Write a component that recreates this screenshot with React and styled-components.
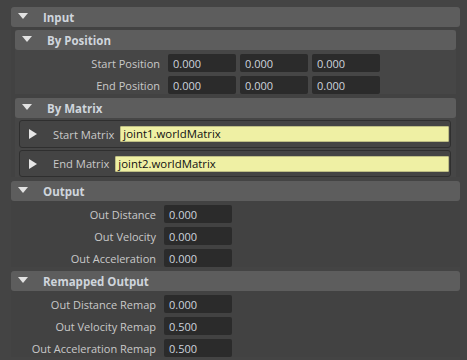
import React from "react";
import styled, { createGlobalStyle } from "styled-components";

const GlobalStyle = createGlobalStyle`
    html, body {
        margin: 0;
        padding: 0;
        background: #444444;
    }
    body {
        font-family: "Open Sans", "Noto Sans", sans-serif;
        font-size: 11px;
        color: #c8c8c8;
    }
`;

const Page = styled.div`
    width: 467px;
    height: 360px;
    overflow: hidden;
    box-sizing: border-box;
    padding: 7px 7px 0 11px;
    display: flex;
    flex-direction: column;
    gap: 4px;
    background: #444444;
`;

const Frame = styled.div`
    display: flex;
    flex-direction: column;
    background: ${(p) => (p.$inner ? "#464646" : "#424242")};
    margin: ${(p) => (p.$inner ? "0 4px 0 4px" : "0")};
`;

const Header = styled.div`
    height: 20px;
    box-sizing: border-box;
    display: flex;
    align-items: center;
    background: #5d5d5d;
    border-radius: 3px;
    padding-left: 7px;
    font-weight: 700;
    font-size: 11.5px;
    color: #cfd5dc;
`;

const DownArrow = styled.span`
    width: 0;
    height: 0;
    border-left: 5.5px solid transparent;
    border-right: 5.5px solid transparent;
    border-top: 6px solid #e2e2e2;
    margin-right: 15px;
    margin-top: -2px;
`;

const Body = styled.div`
    display: flex;
    flex-direction: column;
    gap: ${(p) => p.$gap || 4}px;
    padding-top: ${(p) => p.$top || 4}px;
    padding-bottom: ${(p) => p.$bottom || 0}px;
`;

const Row = styled.div`
    height: 18px;
    display: flex;
    align-items: center;
`;

const Label = styled.div`
    width: ${(p) => p.$w}px;
    padding-right: 8px;
    box-sizing: border-box;
    text-align: right;
    white-space: nowrap;
    color: #c9c9c9;
`;

const Fields = styled.div`
    display: flex;
    gap: 4px;
`;

const NumField = styled.div`
    width: 68px;
    height: 18px;
    box-sizing: border-box;
    background: #2b2b2b;
    border-radius: 2px;
    padding: 2px 0 0 5px;
    color: #cdd4dd;
    font-size: 11px;
    line-height: 16px;
`;

const MatrixBox = styled.div`
    height: ${(p) => p.$h}px;
    box-sizing: border-box;
    margin: 0 5px 0 4px;
    border: 1px solid #2f2f2f;
    border-radius: 3px;
    display: flex;
    align-items: center;
    background: #444444;
`;

const RightArrow = styled.span`
    width: 0;
    height: 0;
    border-top: 5.5px solid transparent;
    border-bottom: 5.5px solid transparent;
    border-left: 8px solid #e6e6e6;
    margin-left: 9px;
    margin-right: 16px;
`;

const MatrixLabel = styled.span`
    color: #c9c9c9;
    font-size: 11.2px;
    margin-right: 6px;
    white-space: nowrap;
`;

const Connection = styled.div`
    flex: 1;
    height: 16px;
    margin-right: 1px;
    box-sizing: border-box;
    background: #eff0a4;
    border: 1px solid #bdbd84;
    border-radius: 1px;
    color: #111111;
    font-size: 11.4px;
    line-height: 14px;
    padding-left: 2px;
`;

const positions = ["Start Position", "End Position"];
const outputs = [
    ["Out Distance", "0.000"],
    ["Out Velocity", "0.000"],
    ["Out Acceleration", "0.000"],
];
const remapped = [
    ["Out Distance Remap", "0.000"],
    ["Out Velocity Remap", "0.500"],
    ["Out Acceleration Remap", "0.500"],
];

const App = () => {
    return (
        <Page>
            <GlobalStyle />
            <Frame>
                <Header>
                    <DownArrow />
                    Input
                </Header>
                <Body $top={3} $gap={4}>
                    <Frame $inner>
                        <Header>
                            <DownArrow />
                            By Position
                        </Header>
                        <Body $top={4} $gap={4}>
                            {positions.map((name) => (
                                <Row key={name}>
                                    <Label $w={153}>{name}</Label>
                                    <Fields>
                                        <NumField>0.000</NumField>
                                        <NumField>0.000</NumField>
                                        <NumField>0.000</NumField>
                                    </Fields>
                                </Row>
                            ))}
                        </Body>
                    </Frame>
                    <Frame $inner>
                        <Header>
                            <DownArrow />
                            By Matrix
                        </Header>
                        <Body $top={2} $gap={2}>
                            <MatrixBox $h={28}>
                                <RightArrow />
                                <MatrixLabel>Start Matrix</MatrixLabel>
                                <Connection>joint1.worldMatrix</Connection>
                            </MatrixBox>
                            <MatrixBox $h={27}>
                                <RightArrow />
                                <MatrixLabel>End Matrix</MatrixLabel>
                                <Connection>joint2.worldMatrix</Connection>
                            </MatrixBox>
                        </Body>
                    </Frame>
                </Body>
            </Frame>
            <Frame>
                <Header>
                    <DownArrow />
                    Output
                </Header>
                <Body $top={4} $gap={4}>
                    {outputs.map(([name, value]) => (
                        <Row key={name}>
                            <Label $w={153}>{name}</Label>
                            <NumField>{value}</NumField>
                        </Row>
                    ))}
                </Body>
            </Frame>
            <Frame>
                <Header>
                    <DownArrow />
                    Remapped Output
                </Header>
                <Body $top={4} $gap={4}>
                    {remapped.map(([name, value]) => (
                        <Row key={name}>
                            <Label $w={153}>{name}</Label>
                            <NumField>{value}</NumField>
                        </Row>
                    ))}
                </Body>
            </Frame>
        </Page>
    );
};

export default App;
